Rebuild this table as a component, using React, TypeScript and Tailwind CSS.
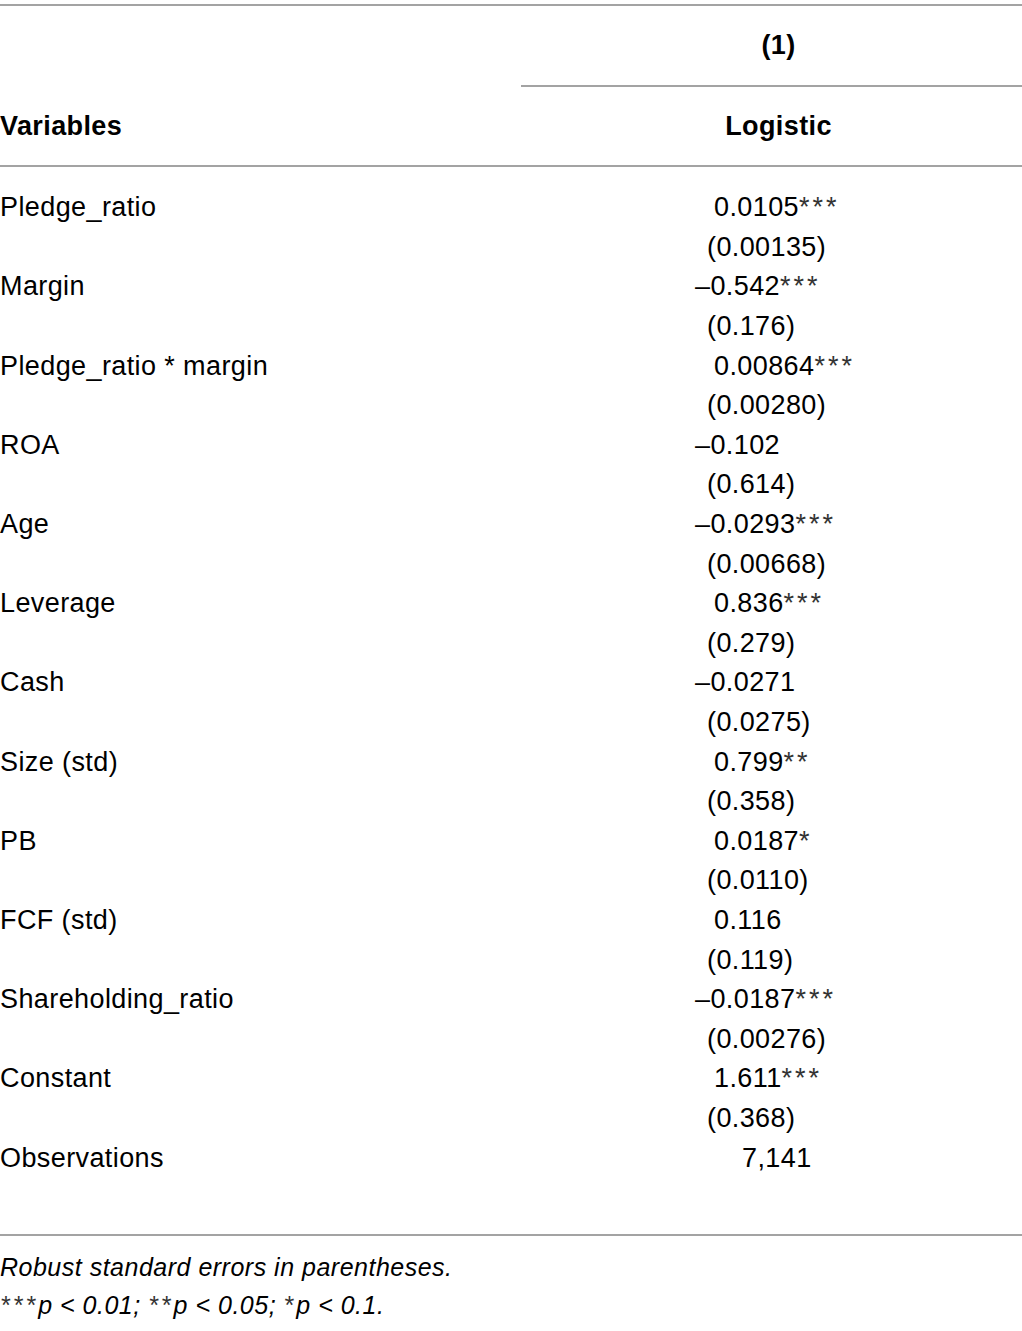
import React from "react";

type Row = { name: string; coef: string; se?: string };

const rows: Row[] = [
  { name: "Pledge_ratio", coef: "0.0105***", se: "(0.00135)" },
  { name: "Margin", coef: "\u20130.542***", se: "(0.176)" },
  { name: "Pledge_ratio * margin", coef: "0.00864***", se: "(0.00280)" },
  { name: "ROA", coef: "\u20130.102", se: "(0.614)" },
  { name: "Age", coef: "\u20130.0293***", se: "(0.00668)" },
  { name: "Leverage", coef: "0.836***", se: "(0.279)" },
  { name: "Cash", coef: "\u20130.0271", se: "(0.0275)" },
  { name: "Size (std)", coef: "0.799**", se: "(0.358)" },
  { name: "PB", coef: "0.0187*", se: "(0.0110)" },
  { name: "FCF (std)", coef: "0.116", se: "(0.119)" },
  { name: "Shareholding_ratio", coef: "\u20130.0187***", se: "(0.00276)" },
  { name: "Constant", coef: "1.611***", se: "(0.368)" },
];

const Rule = ({ className = "" }: { className?: string }) => (
  <div className={`h-[2px] bg-[#a3a3a3] ${className}`} />
);

const Stars = ({ s }: { s: string }) =>
  s ? <span className="tracking-[3px] text-[#333]">{s}</span> : null;

// coefficient cell: negatives hang the dash left of the parentheses
const Coef = ({ value }: { value: string }) => {
  const neg = value.startsWith("\u2013");
  const num = value.replace(/\*+$/, "");
  const stars = value.slice(num.length);
  return (
    <span className={neg ? "ml-[174px]" : "ml-[193px]"}>
      {num}
      <Stars s={stars} />
    </span>
  );
};

const Line = ({ left, right }: { left?: string; right: React.ReactNode }) => (
  <div className="grid grid-cols-[521px_1fr] h-[39.6px] items-center whitespace-nowrap">
    <div>{left}</div>
    <div>{right}</div>
  </div>
);

export default function App() {
  return (
    <div
      className="w-[1022px] h-[1331px] bg-white text-black text-[27px] tracking-[0.4px] leading-none pt-[4px]"
      style={{ fontFamily: '"Liberation Sans", Arial, sans-serif' }}
    >
      <Rule />

      {/* header */}
      <div className="grid grid-cols-[521px_1fr] h-[79px] items-center">
        <div />
        <div className="font-bold text-center pl-[14px]">(1)</div>
      </div>
      <Rule className="ml-[521px]" />
      <div className="grid grid-cols-[521px_1fr] h-[78px] items-center font-bold">
        <div>Variables</div>
        <div className="text-center pl-[14px]">Logistic</div>
      </div>
      <Rule />

      {/* body */}
      <div className="pt-[21px]">
        {rows.map((r) => (
          <React.Fragment key={r.name}>
            <Line left={r.name} right={<Coef value={r.coef} />} />
            <Line right={<span className="ml-[186px]">{r.se}</span>} />
          </React.Fragment>
        ))}
        <Line left="Observations" right={<span className="ml-[221px]">7,141</span>} />
      </div>

      <div className="h-[56px]" />
      <Rule />

      {/* notes */}
      <div className="pt-[13px] italic text-[25px] tracking-[0.5px]">
        <div className="h-[38px] flex items-center">Robust standard errors in parentheses.</div>
        <div className="h-[38px] flex items-center whitespace-pre">
          <Stars s="***" />
          {"p < 0.01; "}
          <Stars s="**" />
          {"p < 0.05; "}
          <Stars s="*" />
          {"p < 0.1."}
        </div>
      </div>
    </div>
  );
}
